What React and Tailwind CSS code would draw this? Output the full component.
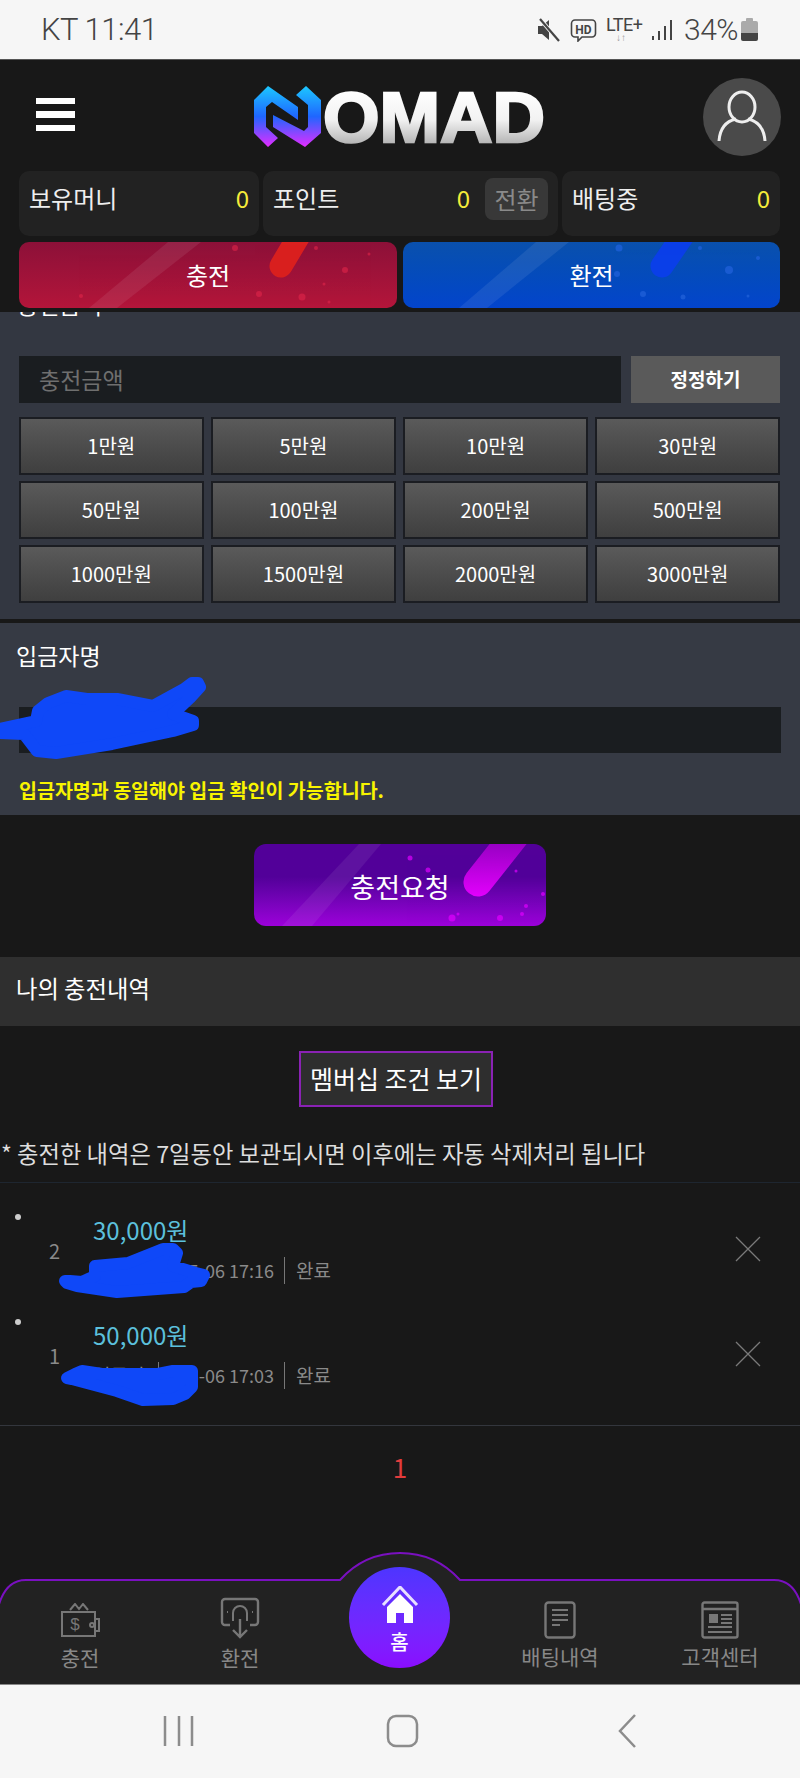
import React from 'react';

const amounts = ['1만원', '5만원', '10만원', '30만원', '50만원', '100만원', '200만원', '500만원', '1000만원', '1500만원', '2000만원', '3000만원'];

const history = [
  { no: 2, amount: '30,000원', time: '05-06 17:16' },
  { no: 1, amount: '50,000원', time: '05-06 17:03' },
];

function StatusBar() {
  return (
    <div className="h-[60px] shrink-0 bg-[#f6f6f6] border-b border-[#555] flex items-center pl-[41px] pr-[42px] text-[#555] font-['Roboto',sans-serif]">
      <span className="text-[31px] leading-none font-light tracking-[-0.5px] text-[#444]">KT 11:41</span>
      <div className="ml-auto flex items-center">
        <svg width="24" height="24" viewBox="0 0 24 24" className="mr-[10px]">
          <path d="M2 8h4l7-6v20l-7-6H2z" fill="#444" />
          <path d="M4 1l19 22" stroke="#f6f6f6" strokeWidth="4" />
          <path d="M4 1l19 22" stroke="#444" strokeWidth="2.2" />
        </svg>
        <svg width="27" height="24" viewBox="0 0 27 24" className="mr-[9px]">
          <path d="M5 2h17a3.500 3.500 0 0 1 3.500 3.500v10a3.500 3.500 0 0 1-3.500 3.500H12l-4 4v-4H5a3.500 3.500 0 0 1-3.500-3.500v-10A3.500 3.500 0 0 1 5 2z" fill="none" stroke="#444" strokeWidth="1.600" />
          <text x="13.500" y="15.500" textAnchor="middle" fontSize="12" fontWeight="700" fill="#444" fontFamily="Roboto">HD</text>
        </svg>
        <div className="w-[38px] mr-[7px] flex flex-col items-center">
          <span className="text-[18px] leading-[16px] text-[#444] self-start tracking-[-0.5px]">LTE+</span>
          <span className="text-[10px] leading-[9px] text-[#999] font-bold mr-[8px]">↓↑</span>
        </div>
        <svg width="22" height="22" viewBox="0 0 22 22" className="mr-[11px]">
          <path d="M2 17v4M8 12v9M14 7v14M20 1v20" stroke="#444" strokeWidth="2" />
        </svg>
        <span className="text-[30px] leading-none font-light tracking-[-0.5px] text-[#444] mr-[3px]">34%</span>
        <div className="w-[17px] h-[23px] flex flex-col items-center">
          <div className="w-[7px] h-[3px] bg-[#aaa] rounded-t-[1px]" />
          <div className="w-[17px] h-[20px] rounded-[2px] bg-gradient-to-b from-[#aaa] from-60% to-[#444] to-60%" />
        </div>
      </div>
    </div>
  );
}

function Logo() {
  return (
    <svg width="292" height="84" viewBox="0 -11 292 84" className="block">
      <defs>
        <linearGradient id="markGrad" x1="0" y1="0" x2="0" y2="61" gradientUnits="userSpaceOnUse">
          <stop offset="0" stopColor="#1cc8ff" />
          <stop offset="0.5" stopColor="#1f66ff" />
          <stop offset="1" stopColor="#e42cff" />
        </linearGradient>
        <linearGradient id="wordGrad" x1="0" y1="4" x2="0" y2="58" gradientUnits="userSpaceOnUse">
          <stop offset="0" stopColor="#ffffff" />
          <stop offset="0.55" stopColor="#f2f2f2" />
          <stop offset="1" stopColor="#b4b4b4" />
        </linearGradient>
      </defs>
      <path d="M14 0L0 14V47L14 61L24 52L12 41V21L18 16L44 34V21z" fill="url(#markGrad)" />
      <path d="M19 29V41L51 61L67 47V14L52 0L42 9L54 19V41L50 45z" fill="url(#markGrad)" />
      <text x="69" y="56" textLength="222" lengthAdjust="spacingAndGlyphs" fontSize="71" fontWeight="700" fontFamily="Liberation Sans" fill="url(#wordGrad)" stroke="url(#wordGrad)" strokeWidth="2.500">OMAD</text>
    </svg>
  );
}

function StatCard({ label, value, className, children }) {
  return (
    <div className={`h-[65px] rounded-[10px] bg-[#222222] flex items-center pl-[10px] pr-[10px] pb-[9px] ${className}`}>
      <span className="text-[24px] leading-none text-[#eeeeee] mb-[3px]">{label}</span>
      <span className="ml-auto text-[24px] leading-none text-[#f6ec3a] mb-[3px]">{value}</span>
      {children}
    </div>
  );
}

// 버튼 배경 장식
function RedArt() {
  return (
    <svg width="378" height="66" viewBox="0 0 378 66" className="absolute inset-0">
      <path d="M149 0H182L98 66H70z" fill="#fff" opacity="0.08" />
      <path d="M281 -8L262 24" stroke="#d9201f" strokeWidth="23" strokeLinecap="round" />
      <g fill="#e0254a" opacity="0.6">
        <circle cx="216" cy="6" r="3" /><circle cx="297" cy="6" r="2" /><circle cx="326" cy="28" r="3" />
        <circle cx="240" cy="52" r="3" /><circle cx="283" cy="55" r="3.500" /><circle cx="305" cy="42" r="1.500" />
        <circle cx="62" cy="54" r="2" /><circle cx="350" cy="12" r="1.500" /><circle cx="310" cy="60" r="1.500" />
      </g>
    </svg>
  );
}

function BlueArt() {
  return (
    <svg width="377" height="66" viewBox="0 0 377 66" className="absolute inset-0">
      <path d="M133 0H166L84 66H56z" fill="#fff" opacity="0.08" />
      <path d="M281 -8L259 24" stroke="#0a3fe8" strokeWidth="23" strokeLinecap="round" />
      <g fill="#1f5fd8" opacity="0.8">
        <circle cx="216" cy="6" r="3.500" /><circle cx="297" cy="6" r="2" /><circle cx="326" cy="28" r="4" />
        <circle cx="240" cy="52" r="3" /><circle cx="280" cy="55" r="2.500" /><circle cx="214" cy="32" r="3" />
        <circle cx="345" cy="54" r="1.500" /><circle cx="355" cy="16" r="2" />
      </g>
    </svg>
  );
}

function PurpleArt() {
  return (
    <svg width="292" height="82" viewBox="0 0 292 82" className="absolute inset-0">
      <defs>
        <linearGradient id="stick" x1="0" y1="0" x2="0" y2="55" gradientUnits="userSpaceOnUse">
          <stop offset="0" stopColor="#9800c4" />
          <stop offset="1" stopColor="#e600ff" />
        </linearGradient>
      </defs>
      <path d="M105 0H127L58 82H28z" fill="#fff" opacity="0.07" />
      <path d="M262 -10L224 38" stroke="url(#stick)" strokeWidth="29" strokeLinecap="round" />
      <g fill="#e000ff" opacity="0.7">
        <circle cx="156" cy="14" r="2.500" /><circle cx="174" cy="26" r="2.500" /><circle cx="262" cy="27" r="1.500" />
        <circle cx="158" cy="52" r="2" /><circle cx="198" cy="74" r="3.500" /><circle cx="246" cy="74" r="3" />
        <circle cx="204" cy="70" r="1.500" /><circle cx="272" cy="62" r="2" /><circle cx="289" cy="50" r="2" />
        <circle cx="268" cy="70" r="2" />
      </g>
    </svg>
  );
}

function Header() {
  return (
    <div className="shrink-0 bg-[#181818] px-[19px] pb-[4px] pt-[18px] relative z-10">
      <div className="grid grid-cols-[1fr_auto_1fr] grid-rows-[78px] items-center">
        <div className="pl-[17px] mb-[5px] flex flex-col gap-[7px]">
          <div className="w-[39px] h-[6px] bg-white" />
          <div className="w-[39px] h-[7px] bg-white" />
          <div className="w-[39px] h-[6px] bg-white" />
        </div>
        <Logo />
        <div className="justify-self-end w-[78px] h-[78px] rounded-full bg-[#4a4a4a] flex items-center justify-center">
          <svg width="50" height="54" viewBox="0 0 50 54" fill="none" stroke="#eeeeee" strokeWidth="3">
            <ellipse cx="25" cy="17" rx="13" ry="15" />
            <path d="M2 51C3 37 10 31 19 29M48 51C47 37 40 31 31 29" />
          </svg>
        </div>
      </div>
      <div className="mt-[15px] flex gap-[4px]">
        <StatCard label="보유머니" value="0" className="w-[240px]" />
        <StatCard label="포인트" value="0" className="w-[295px]">
          <div className="ml-[15px] w-[63px] h-[42px] rounded-[8px] bg-[#383838] text-[#8a8a8a] text-[24px] leading-none flex items-center justify-center">전환</div>
        </StatCard>
        <StatCard label="배팅중" value="0" className="w-[218px]" />
      </div>
      <div className="mt-[6px] flex gap-[6px]">
        <button className="relative overflow-hidden w-[378px] h-[66px] rounded-[10px] bg-gradient-to-b from-[#8c1038] to-[#b4153a] text-white text-[24px]">
          <RedArt />
          <span className="relative">충전</span>
        </button>
        <button className="relative overflow-hidden w-[377px] h-[66px] rounded-[10px] bg-gradient-to-b from-[#0a50ac] to-[#0344cc] text-white text-[24px]">
          <BlueArt />
          <span className="relative">환전</span>
        </button>
      </div>
    </div>
  );
}

function AmountPanel() {
  return (
    <div className="h-[307px] shrink-0 overflow-hidden bg-[#333741] pl-[19px] pr-[20px]">
      <div className="-mt-[24px] h-[68px] text-[23px] leading-[32px] text-white -ml-[2px]">충전금액</div>
      <div className="flex gap-[10px]">
        <div className="w-[602px] h-[47px] bg-[#1a1d20] pl-[20px] flex items-center text-[23px] leading-none text-[#6f6f6f]">충전금액</div>
        <button className="w-[149px] h-[47px] bg-[#5a5a5a] text-white text-[19px] font-bold">정정하기</button>
      </div>
      <div className="mt-[14px] grid grid-cols-4 gap-x-[7.5px] gap-y-[6px]">
        {amounts.map((a) => (
          <button key={a} className="h-[58px] border-2 border-[#1b1d22] bg-gradient-to-b from-[#5a5a5a] to-[#3f3f3f] text-white text-[20px]">
            {a}
          </button>
        ))}
      </div>
    </div>
  );
}

function NamePanel() {
  return (
    <div className="h-[192px] shrink-0 bg-[#363a44] mt-[4px] pt-[15px]">
      <div className="pl-[16px] text-[23px] leading-[34px] text-white">입금자명</div>
      <div className="mx-[19px] mt-[35px] h-[46px] bg-[#1a1d20]" />
      <div className="mt-[22px] pl-[19px] text-[19.5px] leading-[30px] font-bold text-[#f8f400]">입금자명과 동일해야 입금 확인이 가능합니다.</div>
    </div>
  );
}

function HistoryRow({ row }) {
  return (
    <div className="h-[105px] flex pl-[15px] pr-[39px]">
      <div className="w-[6px] h-[6px] mt-[10px] rounded-full bg-[#cccccc]" />
      <div className="w-[72px] pl-[28px] pt-[33px] text-[20px] leading-[28px] text-[#8a8a8a]">{row.no}</div>
      <div className="pt-[11px]">
        <div className="text-[24px] leading-[30px] text-[#5cc0dc]">{row.amount}</div>
        <div className="mt-[11px] flex items-center text-[19px] leading-[28px] text-[#8a8a8a]">
          <span className="w-[65px]">입금자</span>
          <span className="w-px h-[27px] bg-[#777]" />
          <span className="w-[125px] text-right pr-[10px] text-[18px]">{row.time}</span>
          <span className="w-px h-[27px] bg-[#777]" />
          <span className="pl-[11px]">완료</span>
        </div>
      </div>
      <svg width="26" height="26" viewBox="0 0 26 26" className="ml-auto mt-[32px]" fill="none" stroke="#7a7a7a" strokeWidth="1.300">
        <path d="M1 1L25 25M25 1L1 25" />
      </svg>
    </div>
  );
}

function BottomNav() {
  const icon = '#777777';
  return (
    <div className="relative h-[104px] shrink-0">
      <svg width="800" height="134" viewBox="0 0 800 134" className="absolute left-0 -top-[30px]">
        <path d="M-2 58Q5 30 26 30H340C358 10 380 3 400 3S442 10 460 30H774Q795 30 802 58V142H-2z" fill="#222222" stroke="#7a10c0" strokeWidth="2" />
      </svg>
      <div className="absolute left-[349px] -top-[13px] w-[101px] h-[101px] rounded-full bg-gradient-to-b from-[#4d35ff] to-[#8a0cff] flex flex-col items-center text-white">
        <svg width="38" height="38" viewBox="0 0 38 38" className="mt-[19px]">
          <path d="M2 19L19 1L36 19" fill="none" stroke="#e8e0ff" strokeWidth="3" />
          <path d="M19 8L32 21V37H23V27H15V37H6V21z" fill="#ffffff" />
        </svg>
        <span className="text-[20px] leading-[26px] mt-[5px] font-medium">홈</span>
      </div>
      <div className="relative grid grid-cols-5 h-full text-[21px] leading-[28px] text-[#888888]">
        <div className="flex flex-col items-center">
          <svg width="40" height="36" viewBox="0 0 40 36" className="mt-[23px]" fill="none" stroke={icon} strokeWidth="2">
            <path d="M10 7L15 1L19 6L23 1L28 7" />
            <path d="M2 9V33H35V9H2z" />
            <path d="M35 16H39V28H35" />
            <circle cx="32" cy="22" r="2" />
            <text x="15" y="27" textAnchor="middle" fontSize="17" fill={icon} stroke="none" fontFamily="Liberation Sans">$</text>
          </svg>
          <span className="mt-[4px]">충전</span>
        </div>
        <div className="flex flex-col items-center">
          <svg width="40" height="42" viewBox="0 0 40 42" className="mt-[17px]" fill="none" stroke={icon} strokeWidth="2.400">
            <path d="M10 28H5a3 3 0 0 1-3-3V5a3 3 0 0 1 3-3h30a3 3 0 0 1 3 3v20a3 3 0 0 1-3 3h-5" />
            <path d="M13 24V16a7 7 0 0 1 14 0v8" strokeWidth="2" />
            <path d="M20 22V40M13 33L20 40L27 33" />
            <path d="M7 15h1M32 15h1" strokeWidth="2" />
          </svg>
          <span className="mt-[4px]">환전</span>
        </div>
        <div />
        <div className="flex flex-col items-center">
          <svg width="32" height="38" viewBox="0 0 32 38" className="mt-[21px]" fill="none" stroke={icon} strokeWidth="2.400">
            <rect x="1.500" y="1.500" width="29" height="35" rx="3" />
            <path d="M8 9H24M8 14H24M8 19H24M8 24H16" strokeWidth="2" />
          </svg>
          <span className="mt-[3px]">배팅내역</span>
        </div>
        <div className="flex flex-col items-center">
          <svg width="38" height="38" viewBox="0 0 38 38" className="mt-[21px]" fill="none" stroke={icon} strokeWidth="2.400">
            <rect x="1.500" y="1.500" width="35" height="35" rx="2" />
            <path d="M1.500 8H36.500" />
            <rect x="8" y="13" width="9" height="9" fill={icon} stroke="none" />
            <path d="M20 14H31M20 18H31M20 22H31M7 26H31M7 31H31" strokeWidth="1.800" />
          </svg>
          <span className="mt-[3px]">고객센터</span>
        </div>
      </div>
    </div>
  );
}

function SystemNav() {
  return (
    <div className="h-[94px] shrink-0 bg-[#f6f6f6] border-t border-[#888]">
      <svg width="800" height="93" viewBox="0 0 800 93" fill="none" stroke="#8c8c8c" strokeWidth="2.500">
        <path d="M165 31V61M179 31V61M192 31V61" />
        <rect x="388" y="31" width="29" height="30" rx="8" />
        <path d="M635 30L620 46L635 62" />
      </svg>
    </div>
  );
}

export default function App() {
  return (
    <div className="relative w-[800px] h-[1778px] overflow-hidden flex flex-col bg-[#181818] font-['Noto_Sans_CJK_KR','Liberation_Sans',sans-serif]">
      <StatusBar />
      <Header />
      <AmountPanel />
      <NamePanel />

      <div className="h-[142px] shrink-0 flex items-start justify-center pt-[29px]">
        <button className="relative overflow-hidden w-[292px] h-[82px] rounded-[12px] bg-gradient-to-b from-[#520099] from-40% to-[#9c00da] text-white text-[27px]">
          <PurpleArt />
          <span className="relative top-[2px]">충전요청</span>
        </button>
      </div>

      <div className="h-[69px] shrink-0 bg-[#2f2f2f] pl-[16px] pb-[6px] flex items-center text-[23.3px] leading-none text-white">나의 충전내역</div>

      <div className="flex-1">
        <div className="mt-[25px] flex justify-center pr-[8px]">
          <button className="w-[194px] h-[56px] border-2 border-[#8a22b4] bg-[#2e2e2e] text-white text-[25px]">멤버십 조건 보기</button>
        </div>
        <div className="mt-[30px] pl-[1px] text-[23.3px] leading-[32px] text-[#dddddd] whitespace-nowrap mb-[13px]">* 충전한 내역은 7일동안 보관되시면 이후에는 자동 삭제처리 됩니다</div>
        <div className="border-t border-[#1e2630] pt-[21px] pb-[11px]">
          {history.map((row) => (
            <HistoryRow key={row.no} row={row} />
          ))}
        </div>
        <div className="border-t border-[#33363d] pt-[26px] text-center text-[26px] leading-[30px] text-[#e23c3c]">1</div>
      </div>

      <BottomNav />
      <SystemNav />

      {/* 파란 낙서 가림 */}
      <svg width="800" height="1778" viewBox="0 0 800 1778" className="absolute inset-0 pointer-events-none z-20" fill="#0f48f8" stroke="#0f48f8" strokeWidth="12" strokeLinejoin="round">
        <path d="M0 729L36 721L38 711L48 703L66 696L87 699L117 699L153 706L184 689L192 683L198 683L200 687L190 698L173 714L193 721L193 725L173 731L112 744L56 753L37 751L24 734L0 733z" />
        <path d="M65 1281L70 1281L82 1282L95 1276L95 1266L128 1263L163 1249L173 1249L177 1253L173 1266L196 1273L204 1275L201 1281L191 1282L184 1287L117 1292L77 1286L67 1283z" />
        <path d="M67 1378L75 1374L82 1371L102 1374L158 1374L173 1371L192 1371L192 1387L185 1394L173 1399L143 1400L117 1391L72 1379z" />
      </svg>
    </div>
  );
}
